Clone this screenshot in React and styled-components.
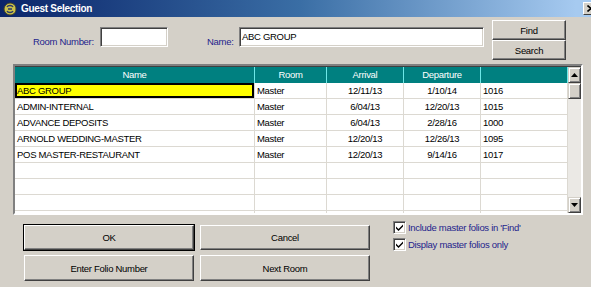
import styled, { createGlobalStyle } from "styled-components";

const GlobalStyle = createGlobalStyle`
  html, body {
    margin: 0;
    padding: 0;
    background: #d4d0c8;
    overflow: hidden;
  }
  * {
    box-sizing: border-box;
  }
`;

const Window = styled.div`
  width: 600px;
  height: 287px;
  background: #d4d0c8;
  font-family: "Liberation Sans", Arial, sans-serif;
  font-size: 9.5px;
  letter-spacing: -0.3px;
  color: #000;
  overflow: hidden;
`;

const TitleBar = styled.div`
  height: 17px;
  display: flex;
  align-items: center;
  padding-left: 3px;
  background: linear-gradient(to right, #0a246a 0%, #3a6ea5 50%, #a6caf0 96%);
`;

const Title = styled.span`
  margin-left: 4px;
  color: #fff;
  font-weight: bold;
  font-size: 10px;
  letter-spacing: -0.3px;
  flex: 1;
`;

const CloseButton = styled.div`
  width: 16px;
  height: 13px;
  margin-right: 1px;
  background: #d4d0c8;
  border: 1px solid;
  border-color: #fff #404040 #404040 #fff;
  display: flex;
  align-items: center;
  justify-content: center;
`;

const SearchRow = styled.div`
  display: flex;
  height: 47px;
  padding-top: 3px;
`;

const Label = styled.label`
  color: #1e1e8c;
  width: ${(p) => p.$width}px;
  margin-left: ${(p) => p.$left}px;
  margin-top: 16px;
`;

const TextInput = styled.div`
  width: ${(p) => p.$width}px;
  height: 20px;
  margin-top: 7px;
  background: #fff;
  border: 1px solid;
  border-color: #808080 #fff #fff #808080;
  box-shadow: inset 1px 1px #404040, inset -1px -1px #d4d0c8;
  padding: 3px 0 0 2px;
  white-space: nowrap;
`;

const ButtonStack = styled.div`
  display: flex;
  flex-direction: column;
  margin-left: 8px;
`;

const WinButton = styled.button`
  width: ${(p) => p.$width}px;
  height: ${(p) => p.$height}px;
  background: #d4d0c8;
  font-family: inherit;
  font-size: 9.5px;
  letter-spacing: -0.3px;
  color: #000;
  padding: 0;
  border: 1px solid;
  border-color: #fff #404040 #404040 #fff;
  box-shadow: ${(p) =>
    p.$default
      ? "0 0 0 1px #000, inset -1px -1px #808080"
      : "inset -1px -1px #808080, inset 1px 1px #d4d0c8"};
`;

const Grid = styled.div`
  margin-left: 13px;
  width: 570px;
  height: 151px;
  display: flex;
  border: 2px solid;
  border-color: #808080 #fff #fff #808080;
  box-shadow: inset 1px 1px #404040;
  background: #fff;
`;

const GridBody = styled.div`
  display: flex;
  flex-direction: column;
  padding: 1px 0 0 0;
  overflow: hidden;
`;

const Row = styled.div`
  display: grid;
  grid-template-columns: 240px 72px 77px 77px 87px;
  height: 16px;
  flex-shrink: 0;
`;

const HeaderCell = styled.div`
  background: #008080;
  color: #fff;
  text-align: center;
  line-height: 15px;
  border-right: 1px solid #6ee8e8;
`;

const Cell = styled.div`
  line-height: 15px;
  padding-left: ${(p) => (p.$center ? 0 : 2)}px;
  text-align: ${(p) => (p.$center ? "center" : "left")};
  border-right: 1px solid #dcd9d2;
  border-bottom: 1px solid #dcd9d2;
  white-space: nowrap;
  overflow: hidden;
  background: ${(p) => (p.$selected ? "#ffff00" : "#fff")};
  box-shadow: ${(p) => (p.$selected ? "inset 0 0 0 2px #000" : "none")};
`;

const ScrollBar = styled.div`
  width: 13px;
  margin-top: 1px;
  display: flex;
  flex-direction: column;
  background: #ebe9e5;
`;

const ScrollButton = styled.div`
  height: 16px;
  flex-shrink: 0;
  background: #d4d0c8;
  border: 1px solid;
  border-color: #d4d0c8 #404040 #404040 #d4d0c8;
  box-shadow: inset 1px 1px #fff, inset -1px -1px #808080;
  display: flex;
  align-items: center;
  justify-content: center;
`;

const ScrollTrack = styled.div`
  flex: 1;
`;

const Footer = styled.div`
  display: flex;
`;

const ButtonGrid = styled.div`
  display: grid;
  grid-template-columns: 170px 170px;
  column-gap: 6px;
  row-gap: 5px;
  margin: 10px 0 0 24px;
`;

const Options = styled.div`
  display: flex;
  flex-direction: column;
  gap: 4px;
  margin: 6px 0 0 23px;
`;

const Option = styled.div`
  display: flex;
  align-items: center;
  gap: 2px;
  color: #1e1e8c;
`;

const CheckBox = styled.div`
  width: 13px;
  height: 13px;
  background: #fff;
  border: 1px solid;
  border-color: #808080 #fff #fff #808080;
  box-shadow: inset 1px 1px #404040, inset -1px -1px #d4d0c8;
  display: flex;
  align-items: center;
  justify-content: center;
`;

const rows = [
  ["ABC GROUP", "Master", "12/11/13", "1/10/14", "1016"],
  ["ADMIN-INTERNAL", "Master", "6/04/13", "12/20/13", "1015"],
  ["ADVANCE DEPOSITS", "Master", "6/04/13", "2/28/16", "1000"],
  ["ARNOLD WEDDING-MASTER", "Master", "12/20/13", "12/26/13", "1095"],
  ["POS MASTER-RESTAURANT", "Master", "12/20/13", "9/14/16", "1017"],
  ["", "", "", "", ""],
  ["", "", "", "", ""],
  ["", "", "", "", ""],
  ["", "", "", "", ""],
];

const Arrow = ({ down }) => (
  <svg width="7" height="4" viewBox="0 0 7 4">
    <path d={down ? "M0 0H7L3.5 4Z" : "M3.5 0L7 4H0Z"} fill="#000" />
  </svg>
);

const Check = () => (
  <svg width="9" height="9" viewBox="0 0 9 9">
    <path d="M1 3.5L3.5 6L8 1.5V3.5L3.5 8L1 5.5Z" fill="#000" />
  </svg>
);

const CloseIcon = () => (
  <svg width="8" height="7" viewBox="0 0 8 7">
    <path d="M0.5 0.5L7.5 6.5M7.5 0.5L0.5 6.5" stroke="#000" strokeWidth="1.6" />
  </svg>
);

const AppIcon = () => (
  <svg width="14" height="14" viewBox="0 0 14 14">
    <path d="M7 1C10 1 13 3 13 7S10 13 7 13 1 10 1 7 4 1 7 1Z" fill="#c9c14a" stroke="#3a3a2a" strokeWidth="1" />
    <path d="M4 5C5 3 9 3 10 5M4 9C5 11 9 11 10 9M5 7H9" stroke="#2a3a6a" strokeWidth="1.4" fill="none" />
  </svg>
);

export default function App() {
  return (
    <>
      <GlobalStyle />
      <Window>
        <TitleBar>
          <AppIcon />
          <Title>Guest Selection</Title>
          <CloseButton>
            <CloseIcon />
          </CloseButton>
        </TitleBar>
        <SearchRow>
          <Label $left={33} $width={67}>Room Number:</Label>
          <TextInput $width={68} />
          <Label $left={39} $width={32}>Name:</Label>
          <TextInput $width={245}>ABC GROUP</TextInput>
          <ButtonStack>
            <WinButton $width={74} $height={20}>Find</WinButton>
            <WinButton $width={74} $height={20}>Search</WinButton>
          </ButtonStack>
        </SearchRow>
        <Grid>
          <GridBody>
            <Row>
              <HeaderCell>Name</HeaderCell>
              <HeaderCell>Room</HeaderCell>
              <HeaderCell>Arrival</HeaderCell>
              <HeaderCell>Departure</HeaderCell>
              <HeaderCell />
            </Row>
            {rows.map((r, i) => (
              <Row key={i}>
                <Cell $selected={i === 0}>{r[0]}</Cell>
                <Cell>{r[1]}</Cell>
                <Cell $center>{r[2]}</Cell>
                <Cell $center>{r[3]}</Cell>
                <Cell>{r[4]}</Cell>
              </Row>
            ))}
          </GridBody>
          <ScrollBar>
            <ScrollButton>
              <Arrow />
            </ScrollButton>
            <ScrollButton />
            <ScrollTrack />
            <ScrollButton>
              <Arrow down />
            </ScrollButton>
          </ScrollBar>
        </Grid>
        <Footer>
          <ButtonGrid>
            <WinButton $width={170} $height={25} $default>OK</WinButton>
            <WinButton $width={170} $height={25}>Cancel</WinButton>
            <WinButton $width={170} $height={26}>Enter Folio Number</WinButton>
            <WinButton $width={170} $height={26}>Next Room</WinButton>
          </ButtonGrid>
          <Options>
            <Option>
              <CheckBox>
                <Check />
              </CheckBox>
              Include master folios in 'Find'
            </Option>
            <Option>
              <CheckBox>
                <Check />
              </CheckBox>
              Display master folios only
            </Option>
          </Options>
        </Footer>
      </Window>
    </>
  );
}
